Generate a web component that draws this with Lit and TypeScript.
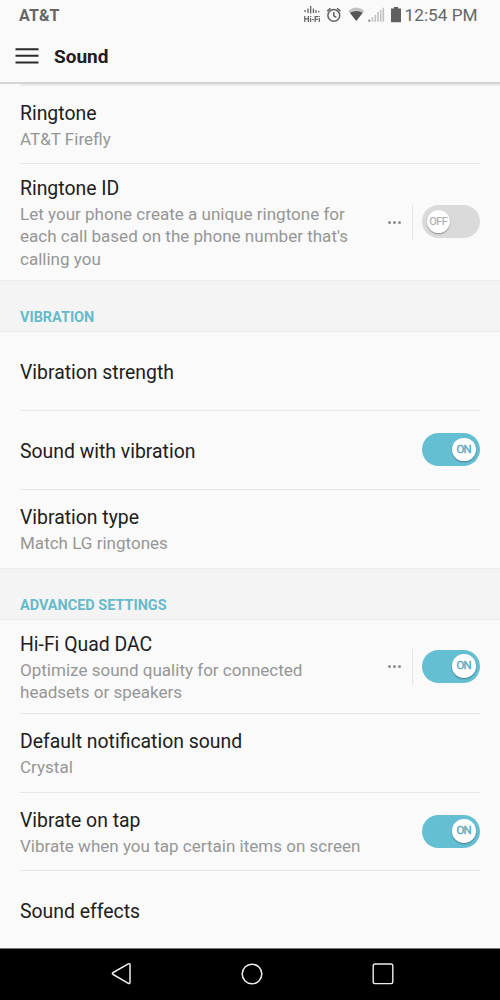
import { LitElement, html, css, nothing } from "lit";
import { customElement, property } from "lit/decorators.js";

@customElement("toggle-switch")
class ToggleSwitch extends LitElement {
  @property({ type: Boolean }) on = false;

  static styles = css`
    :host { display: block; flex: none; margin-bottom: 1px; }
    .track {
      box-sizing: border-box;
      width: 58px;
      height: 33px;
      border-radius: 17px;
      padding: 0 4.5px;
      background: #dadada;
      display: flex;
      align-items: center;
    }
    .track.on { background: #65bfd2; justify-content: flex-end; }
    .knob {
      display: flex;
      justify-content: center;
      width: 23.5px;
      height: 23.5px;
      border-radius: 50%;
      background: #fff;
      box-shadow: 0 1px 1.5px rgba(0, 0, 0, 0.35);
      color: #adadad;
      font: 400 11px/24px Roboto, sans-serif;
      letter-spacing: -0.6px;
      -webkit-text-stroke: 0.2px currentColor;
    }
    .on .knob { color: #55abc0; font-size: 11.3px; -webkit-text-stroke: 0.4px currentColor; }
  `;

  render() {
    return html`<div class="track ${this.on ? "on" : ""}">
      <div class="knob">${this.on ? "ON" : "OFF"}</div>
    </div>`;
  }
}

@customElement("setting-row")
class SettingRow extends LitElement {
  @property() heading = "";
  @property({ attribute: false }) lines: string[] = [];
  @property() toggle = "";
  @property({ type: Boolean }) more = false;

  static styles = css`
    :host { display: flex; align-items: center; padding: 0 20px; box-sizing: border-box; }
    .text { flex: 1; white-space: nowrap; padding-top: 3px; }
    .title { font-size: 19.4px; line-height: 23px; color: #202020; }
    .desc { font-size: 17.05px; line-height: 22.4px; color: #969696; margin-top: 3px; }
    .dots { display: flex; gap: 2px; margin: 0 11px 0 0; }
    .dot { width: 3px; height: 3px; border-radius: 50%; background: #8d8d8d; }
    .rule { width: 1px; height: 36px; background: #e6e6e6; margin-right: 9px; }
  `;

  render() {
    return html`
      <div class="text">
        <div class="title">${this.heading}</div>
        ${this.lines.length
          ? html`<div class="desc">${this.lines.map((l) => html`<div>${l}</div>`)}</div>`
          : nothing}
      </div>
      ${this.more
        ? html`<div class="dots"><i class="dot"></i><i class="dot"></i><i class="dot"></i></div>
            <div class="rule"></div>`
        : nothing}
      ${this.toggle ? html`<toggle-switch ?on=${this.toggle === "on"}></toggle-switch>` : nothing}
    `;
  }
}

@customElement("app-root")
class AppRoot extends LitElement {
  static styles = css`
    :host {
      display: flex;
      flex-direction: column;
      width: 500px;
      height: 1000px;
      overflow: hidden;
      background: #fafafa;
      font-family: Roboto, sans-serif;
    }
    svg { display: block; flex: none; }
    .top { height: 82px; border-bottom: 2px solid #d4d4d4; flex: none; }
    .status { height: 32px; display: flex; align-items: center; padding: 0 22.5px 0 19px; color: #666; }
    .carrier { flex: 1; font-size: 16px; font-weight: 700; line-height: 32px; letter-spacing: 0.1px; }
    .clock { font-size: 17.2px; line-height: 30px; padding-bottom: 2px; margin-left: 2.5px; }
    .bar { display: flex; align-items: center; height: 50px; padding-left: 15px; gap: 15px; }
    .name { font-size: 19px; font-weight: 700; color: #202020; line-height: 50px; }
    .scroll-edge { height: 2px; margin-left: 20px; background: #ebebeb; flex: none; }
    .list { display: flex; flex-direction: column; }
    .h77 { height: 77px; }
    .h78 { height: 78px; }
    .h93 { height: 93px; }
    .h116 { height: 116px; }
    .line { height: 1px; margin: 0 20px; background: #e7e7e7; }
    .section {
      box-sizing: border-box;
      height: 52px;
      border-top: 1px solid #ebebeb;
      border-bottom: 1px solid #ebebeb;
      background: #f4f4f4;
      color: #66bacb;
      font-size: 14.45px;
      font-weight: 700;
      line-height: 17px;
      padding: 28px 20px 0;
    }
    .nav {
      margin-top: auto;
      box-sizing: border-box;
      height: 52px;
      background: #000;
      border-top: 1px solid #777;
      flex: none;
      display: flex;
      align-items: center;
      justify-content: space-between;
      padding: 0 105px 2px 110px;
    }
  `;

  render() {
    return html`
      <div class="top">
        <div class="status">
          <div class="carrier">AT&amp;T</div>
          <svg width="100" height="24" viewBox="302 4.5 100 24">
            <g stroke="#666" stroke-width="1.3" fill="none">
              <path d="M305 10.5v2M308 9v4.5M310.7 6.5v7.5M313.4 9v4.5M316 10.5v3M318.7 11.5v1.5" />
            </g>
            <g stroke="#666" stroke-width="1.3" fill="none">
              <path d="M304.8 16.5v6M308.4 16.5v6M304.8 19.4h3.6M310.6 18.4v4.1M312.2 20.2h1.8M315.2 22.5v-5.4h3M315.2 19.8h2.6M319.3 18.4v4.1M310.6 16.5v1M319.3 16.5v1" />
            </g>
            <g stroke="#606060" fill="none" stroke-width="1.5">
              <circle cx="333.8" cy="15.9" r="5.9" />
              <path d="M333.8 12.5v3.8l2.6 1.6M327.2 11.6l3.3-2.8M340.4 11.6l-3.3-2.8" />
            </g>
            <path d="M348.3 11.2q8-6.6 16 0L356.3 21.4z" fill="#c4c4c4" />
            <path d="M349.9 13.2q6.4-3.4 12.8 0L356.3 21.4z" fill="#555" />
            <path d="M369.3 22.2v-2" stroke="#777" stroke-width="1.8" />
            <path d="M372.4 22.2v-4.4M375.3 22.2v-7M378 22.2v-9.6M380.7 22.2v-11.6M383.3 22.2v-14" stroke="#c2c2c2" stroke-width="1.6" />
            <path d="M391 9h2.8V7.6h4.4V9h2.8v13.8h-10z" fill="#606060" />
          </svg>
          <div class="clock">12:54 PM</div>
        </div>
        <div class="bar">
          <svg width="24" height="18" viewBox="0 0 24 18">
            <path d="M.5 1.2h23M.5 7.8h23M.5 14.5h23" stroke="#2a2a2a" stroke-width="2" />
          </svg>
          <div class="name">Sound</div>
        </div>
      </div>
      <div class="scroll-edge"></div>
      <div class="list">
        <setting-row class="h77" heading="Ringtone" .lines=${["AT&T Firefly"]}></setting-row>
        <div class="line"></div>
        <setting-row class="h116" heading="Ringtone ID" toggle="off" more
          .lines=${["Let your phone create a unique ringtone for", "each call based on the phone number that's", "calling you"]}></setting-row>
        <div class="section">VIBRATION</div>
        <setting-row class="h78" heading="Vibration strength"></setting-row>
        <div class="line"></div>
        <setting-row class="h78" heading="Sound with vibration" toggle="on"></setting-row>
        <div class="line"></div>
        <setting-row class="h78" heading="Vibration type" .lines=${["Match LG ringtones"]}></setting-row>
        <div class="section">ADVANCED SETTINGS</div>
        <setting-row class="h93" heading="Hi-Fi Quad DAC" toggle="on" more
          .lines=${["Optimize sound quality for connected", "headsets or speakers"]}></setting-row>
        <div class="line"></div>
        <setting-row class="h78" heading="Default notification sound" .lines=${["Crystal"]}></setting-row>
        <div class="line"></div>
        <setting-row class="h77" heading="Vibrate on tap" toggle="on"
          .lines=${["Vibrate when you tap certain items on screen"]}></setting-row>
        <div class="line"></div>
        <setting-row class="h77" heading="Sound effects"></setting-row>
      </div>
      <div class="nav">
        <svg width="22" height="24" viewBox="0 0 22 24">
          <path d="M18.3 1.9 3.2 10.5q-1.7 1 0 2L18.3 21.3q1.7.8 1.7-1V2.9q0-1.8-1.7-1z" fill="none" stroke="#eee" stroke-width="1.5" />
        </svg>
        <svg width="24" height="24" viewBox="0 0 24 24">
          <circle cx="12" cy="12" r="9.8" fill="none" stroke="#eee" stroke-width="1.5" />
        </svg>
        <svg width="24" height="24" viewBox="0 0 24 24">
          <rect x="2.2" y="2" width="19.6" height="19.6" rx="1.8" fill="none" stroke="#eee" stroke-width="1.4" />
        </svg>
      </div>
    `;
  }
}
